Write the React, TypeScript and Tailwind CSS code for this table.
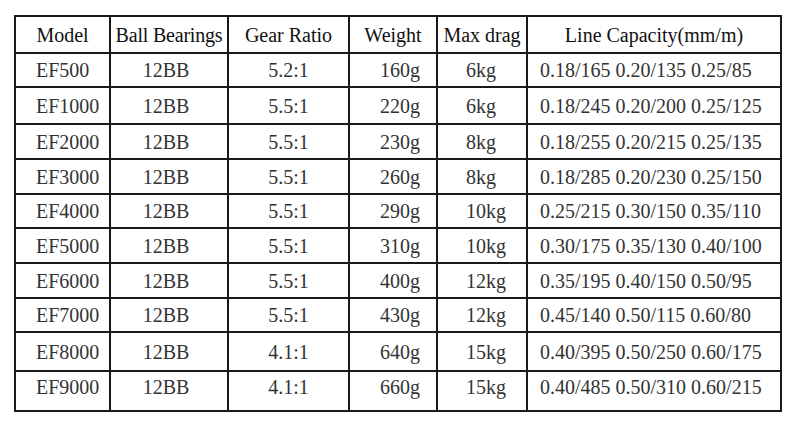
import React from 'react';

interface Reel {
  model: string;
  bearings: string;
  ratio: string;
  weight: string;
  drag: string;
  capacity: string;
  h: string;
}

const REELS: Reel[] = [
  { model: 'EF500', bearings: '12BB', ratio: '5.2:1', weight: '160g', drag: '6kg', capacity: '0.18/165 0.20/135 0.25/85', h: 'h-[34px]' },
  { model: 'EF1000', bearings: '12BB', ratio: '5.5:1', weight: '220g', drag: '6kg', capacity: '0.18/245 0.20/200 0.25/125', h: 'h-[37px]' },
  { model: 'EF2000', bearings: '12BB', ratio: '5.5:1', weight: '230g', drag: '8kg', capacity: '0.18/255 0.20/215 0.25/135', h: 'h-[35px]' },
  { model: 'EF3000', bearings: '12BB', ratio: '5.5:1', weight: '260g', drag: '8kg', capacity: '0.18/285 0.20/230 0.25/150', h: 'h-[35px]' },
  { model: 'EF4000', bearings: '12BB', ratio: '5.5:1', weight: '290g', drag: '10kg', capacity: '0.25/215 0.30/150 0.35/110', h: 'h-[34px]' },
  { model: 'EF5000', bearings: '12BB', ratio: '5.5:1', weight: '310g', drag: '10kg', capacity: '0.30/175 0.35/130 0.40/100', h: 'h-[35px]' },
  { model: 'EF6000', bearings: '12BB', ratio: '5.5:1', weight: '400g', drag: '12kg', capacity: '0.35/195 0.40/150 0.50/95', h: 'h-[35px]' },
  { model: 'EF7000', bearings: '12BB', ratio: '5.5:1', weight: '430g', drag: '12kg', capacity: '0.45/140 0.50/115 0.60/80', h: 'h-[34px]' },
  { model: 'EF8000', bearings: '12BB', ratio: '4.1:1', weight: '640g', drag: '15kg', capacity: '0.40/395 0.50/250 0.60/175', h: 'h-[39px]' },
  { model: 'EF9000', bearings: '12BB', ratio: '4.1:1', weight: '660g', drag: '15kg', capacity: '0.40/485 0.50/310 0.60/215', h: 'h-[40px]' },
];

const cell = 'border-2 border-[#1a1a1a] p-0';

export default function App() {
  return (
    <div className="w-[800px] h-[444px] bg-white pt-[15px] pl-[14px] font-['Liberation_Serif',serif] text-[20px] leading-none">
      <table className="table-fixed border-collapse w-[766px]">
        <colgroup>
          <col className="w-[95px]" />
          <col className="w-[118px]" />
          <col className="w-[121px]" />
          <col className="w-[88px]" />
          <col className="w-[90px]" />
          <col className="w-[254px]" />
        </colgroup>
        <thead>
          <tr className="h-[37px] text-[#111]">
            <th className={`${cell} font-normal text-center`}>Model</th>
            <th className={`${cell} font-normal text-center whitespace-nowrap tracking-[-0.2px]`}>Ball Bearings</th>
            <th className={`${cell} font-normal text-center`}>Gear Ratio</th>
            <th className={`${cell} font-normal text-center`}>Weight</th>
            <th className={`${cell} font-normal text-center`}>Max drag</th>
            <th className={`${cell} font-normal text-center`}>Line Capacity(mm/m)</th>
          </tr>
        </thead>
        <tbody className="text-[#333]">
          {REELS.map((r, i) => {
            const last = i === REELS.length - 1;
            const v = last ? 'align-top pt-[5px]' : 'align-middle';
            return (
              <tr key={r.model} className={r.h}>
                <td className={`${cell} ${v} pl-[20px]`}>{r.model}</td>
                <td className={`${cell} ${v} text-center pr-[6px]`}>{r.bearings}</td>
                <td className={`${cell} ${v} text-center`}>{r.ratio}</td>
                <td className={`${cell} ${v} pl-[30px]`}>{r.weight}</td>
                <td className={`${cell} ${v} pl-[28px]`}>{r.drag}</td>
                <td className={`${cell} ${v} pl-[12px] whitespace-nowrap`}>{r.capacity}</td>
              </tr>
            );
          })}
        </tbody>
      </table>
    </div>
  );
}
